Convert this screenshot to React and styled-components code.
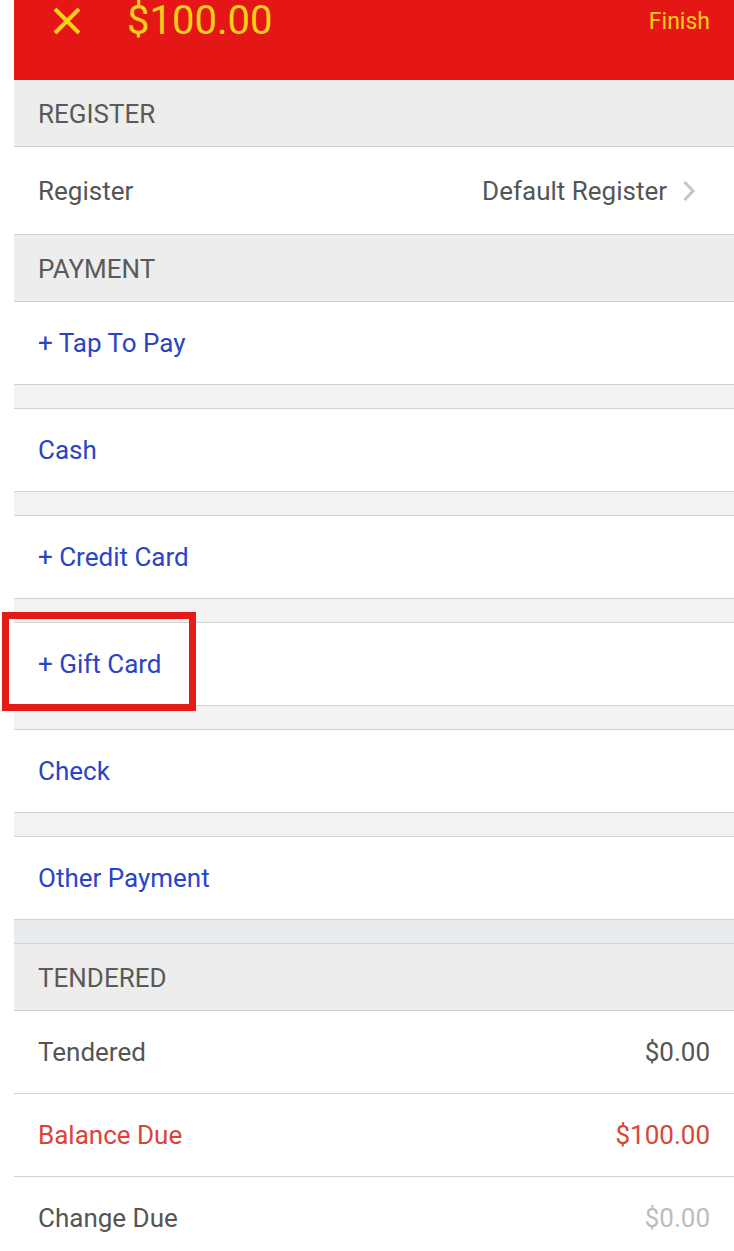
import React from 'react';
import styled, { createGlobalStyle } from 'styled-components';

const GlobalStyle = createGlobalStyle`
  body {
    margin: 0;
    background: #fff;
    font-family: Roboto, "Noto Sans", sans-serif;
  }
`;

const Page = styled.div`
  padding-left: 14px;
  width: 720px;
`;

const Header = styled.header`
  height: 80px;
  background: #e51616;
  color: #f7d117;
  display: flex;
  align-items: flex-start;
  padding: 0 24px 0 39px;
`;

const HeaderBar = styled.div`
  flex: 1;
  height: 42px;
  display: flex;
  align-items: center;
`;

const CloseButton = styled.button`
  background: none;
  border: 0;
  padding: 0;
  width: 28px;
  height: 28px;
  display: flex;
  color: inherit;
`;

const Total = styled.span`
  font-size: 40px;
  margin-left: 46px;
  line-height: 1;
`;

const Finish = styled.span`
  margin-left: auto;
  font-size: 23px;
`;

const SectionTitle = styled.div`
  height: 64px;
  display: flex;
  align-items: center;
  padding: 2px 0 0 24px;
  background: #ededed;
  border-bottom: 1px solid #cfcfcf;
  color: #5a5a5a;
  font-size: 26px;
`;

const Row = styled.div`
  position: relative;
  height: ${(p) => p.$height || 82}px;
  display: flex;
  align-items: center;
  justify-content: space-between;
  padding: 0 24px;
  background: #fff;
  border-bottom: 1px solid ${(p) => (p.$last ? 'transparent' : '#d2d2d2')};
  font-size: 26px;
  color: ${(p) => p.$color || '#555'};
`;

const Value = styled.span`
  color: ${(p) => p.$color || '#555'};
  margin-right: ${(p) => p.$inset || 0}px;
  display: flex;
  align-items: center;
  gap: 15px;
`;

const Spacer = styled.div`
  height: 23px;
  background: ${(p) => p.$tint || '#f2f2f2'};
  border-bottom: 1px solid #d2d2d2;
`;

const Highlight = styled.div`
  position: absolute;
  left: -12px;
  top: -11px;
  width: 194px;
  height: 99px;
  box-sizing: border-box;
  border: 7px solid #e51a1a;
  pointer-events: none;
`;

const Chevron = () => (
  <svg width="14" height="22" viewBox="0 0 14 22">
    <path d="M2.5 2 L11 11 L2.5 20" fill="none" stroke="#c6c6c6" strokeWidth="3" />
  </svg>
);

const payments = [
  { label: '+ Tap To Pay' },
  { label: 'Cash' },
  { label: '+ Credit Card' },
  { label: '+ Gift Card', marked: true },
  { label: 'Check' },
  { label: 'Other Payment' },
];

const BLUE = '#2944c6';
const RED = '#db4437';

export default function App() {
  return (
    <Page>
      <GlobalStyle />
      <Header>
        <HeaderBar>
          <CloseButton aria-label="Close">
            <svg width="28" height="28" viewBox="0 0 28 28">
              <path d="M2 2 L26 26 M26 2 L2 26" stroke="currentColor" strokeWidth="4" />
            </svg>
          </CloseButton>
          <Total>$100.00</Total>
          <Finish>Finish</Finish>
        </HeaderBar>
      </Header>

      <SectionTitle>REGISTER</SectionTitle>
      <Row $height={87}>
        <span>Register</span>
        <Value $inset={14}>
          Default Register
          <Chevron />
        </Value>
      </Row>

      <SectionTitle>PAYMENT</SectionTitle>
      {payments.map((p, i) => (
        <React.Fragment key={p.label}>
          {i > 0 && <Spacer />}
          <Row $color={BLUE}>
            <span>{p.label}</span>
            {p.marked && <Highlight />}
          </Row>
        </React.Fragment>
      ))}
      <Spacer $tint="#e9ecef" />

      <SectionTitle>TENDERED</SectionTitle>
      <Row>
        <span>Tendered</span>
        <Value>$0.00</Value>
      </Row>
      <Row $color={RED}>
        <span>Balance Due</span>
        <Value $color={RED}>$100.00</Value>
      </Row>
      <Row $last>
        <span>Change Due</span>
        <Value $color="#bdbdbd">$0.00</Value>
      </Row>
    </Page>
  );
}
